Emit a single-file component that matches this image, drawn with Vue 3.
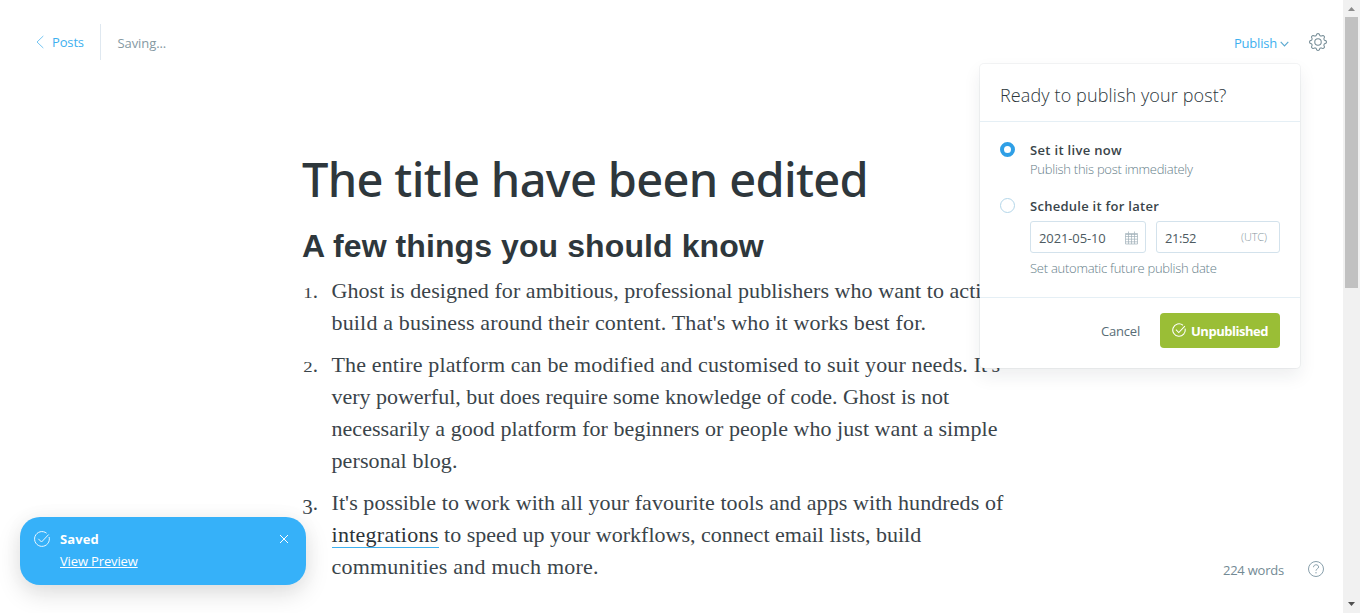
<script setup>
const items = [
  {
    n: '1',
    lines: [
      [{ t: 'Ghost is designed for ambitious, professional publishers who want to actively', s: 0.057 }],
      [{ t: "build a business around their content. That's who it works best for.", s: 0.165 }],
    ],
  },
  {
    n: '2',
    lines: [
      [{ t: "The entire platform can be modified and customised to suit your needs. It's", s: 0.138 }],
      [{ t: 'very powerful, but does require some knowledge of code. Ghost is not', s: -0.02 }],
      [{ t: 'necessarily a good platform for beginners or people who just want a simple', s: 0.05 }],
      [{ t: 'personal blog.', s: 0.097 }],
    ],
  },
  {
    n: '3',
    lines: [
      [{ t: "It's possible to work with all your favourite tools and apps with hundreds of", s: 0.08 }],
      [
        { t: 'integrations', s: 0.27, link: true },
        { t: ' to speed up your workflows, connect email lists, build', s: 0.01 },
      ],
      [{ t: 'communities and much more.', s: 0.22 }],
    ],
  },
]

// Eight-toothed gear outline centred in a 24-unit box
const gearPath = 'M' + Array.from({ length: 96 }, (_, i) => {
  const a = (i / 96) * Math.PI * 2
  const r = 10 + 1.25 * Math.tanh(1.6 * Math.cos(8 * a)) / Math.tanh(1.6)
  return `${(12 + r * Math.sin(a)).toFixed(2)} ${(12 - r * Math.cos(a)).toFixed(2)}`
}).join('L') + 'Z'
</script>

<template>
  <div class="editor">
    <header class="topbar">
      <a class="back">
        <svg width="8" height="14" viewBox="0 0 8 14"><path d="M7.300 1 1 7l6.300 6" /></svg>
        <span>Posts</span>
      </a>
      <span class="status">Saving...</span>
      <span class="publish">Publish</span>
      <svg class="chev" width="9" height="6" viewBox="0 0 9 6"><path d="M.7.8 4.500 4.900 8.300.8" /></svg>
      <svg class="gear" width="18" height="18" viewBox="0 0 24 24">
        <circle cx="12" cy="12" r="4.300" />
        <path :d="gearPath" />
      </svg>
    </header>

    <main class="post">
      <h1>The title have been edited</h1>
      <h2>A few things you should know</h2>
      <ol>
        <li v-for="item in items" :key="item.n">
          <span class="num"><i :class="'d' + item.n">{{ item.n }}</i>.</span>
          <div class="text">
            <div v-for="(line, i) in item.lines" :key="i" class="line"><span
              v-for="run in line" :key="run.t" :class="{ link: run.link }" :style="{ letterSpacing: run.s + 'px' }">{{ run.t }}</span></div>
          </div>
        </li>
      </ol>
    </main>

    <section class="menu">
      <div class="menu-head">Ready to publish your post?</div>
      <div class="menu-body">
        <div class="option">
          <span class="radio on"></span>
          <div class="option-text">
            <div class="label now">Set it live now</div>
            <div class="desc">Publish this post immediately</div>
          </div>
        </div>
        <div class="option later">
          <span class="radio"></span>
          <div class="option-text">
            <div class="label">Schedule it for later</div>
            <div class="fields">
              <div class="field date">
                <span>2021-05-10</span>
                <svg width="13" height="14" viewBox="0 0 13 14">
                  <path d="M.5 2.500h12v10.500H.5zM.5 5.500h12M.5 8.200h12M.5 10.800h12M3.500 3v10M6.500 3v10M9.500 3v10M3.500.5v2M9.500.5v2M1 3.500h11" />
                </svg>
              </div>
              <div class="field time"><span>21:52</span><small>(UTC)</small></div>
            </div>
            <div class="desc auto">Set automatic future publish date</div>
          </div>
        </div>
      </div>
      <div class="menu-foot">
        <span class="cancel">Cancel</span>
        <button>
          <svg width="14" height="14" viewBox="0 0 16 16"><path d="M14.900 6.500A7.100 7.100 0 1 1 12.500 2.600M4.500 7.700l3.200 3.200L14.700 3.500" /></svg>
          <span>Unpublished</span>
        </button>
      </div>
    </section>

    <aside class="toast">
      <svg class="tick" width="16" height="16" viewBox="0 0 16 16"><path d="M15.100 6A7.400 7.400 0 1 1 12.600 2.200M4.300 7.800l3.200 3.200L14.700 3.500" /></svg>
      <div class="toast-text">
        <b>Saved</b>
        <a>View Preview</a>
      </div>
      <svg class="close" width="10" height="10" viewBox="0 0 10 10"><path d="m1 1 8 8M9 1 1 9" /></svg>
    </aside>

    <footer class="count">
      <span>224 words</span>
      <svg width="16" height="16" viewBox="0 0 16 16">
        <circle cx="8" cy="8" r="7.500" />
        <path d="M5.500 6.200C5.500 3 10.600 3 10.600 6c0 1.800-2.600 1.800-2.600 3.700M8 11v1.400" />
      </svg>
    </footer>

    <div class="scrollbar">
      <svg width="17" height="17" viewBox="0 0 17 17"><path fill="#8b8b8b" d="M8.500 7 12 11H5z" /></svg>
      <div class="thumb"></div>
      <svg width="17" height="17" viewBox="0 0 17 17"><path fill="#505050" d="M5 6h7l-3.500 4z" /></svg>
    </div>
  </div>
</template>

<style>
body { margin: 0; overflow: hidden; }
</style>

<style scoped>
.editor {
  position: relative;
  width: 1360px;
  height: 613px;
  overflow: hidden;
  background: #fff;
  color: #394047;
  font: 13px/18px 'Open Sans', 'Noto Sans', sans-serif;
}
svg { display: block; fill: none; flex: none; }
.topbar { display: flex; align-items: flex-start; height: 60px; padding: 24px 33px 0 36px; box-sizing: border-box; width: 1360px; }
.back { display: flex; height: 36px; width: 64px; border-right: 1px solid #dfe8f0; color: #3eb0ef; letter-spacing: -0.15px; line-height: 36px; }
.back svg { margin: 11px 8px 0 0; stroke: #75c5f2; stroke-width: 1; }
.status { margin: 10px 0 0 16.500px; color: #8599a3; letter-spacing: -0.08px; }
.publish { margin: 10px 0 0 auto; color: #3eb0ef; letter-spacing: -0.21px; }
.chev { margin: 17px 20px 0 3px; stroke: #5ba9d0; stroke-width: 1.1; }
.gear { margin: 9px 0 0; stroke: #738a94; stroke-width: 1.35; }

.post { padding: 94px 0 0 302px; }
h1 { margin: 0; font: 500 47px/50px 'Noto Sans', sans-serif; letter-spacing: -0.68px; color: #2e373c; white-space: nowrap; }
h2 { margin: 22px 0 0; font: 700 32px/40px 'Liberation Sans', Arial, sans-serif; letter-spacing: 0.09px; color: #2e373c; }
ol { list-style: none; margin: 9px 0 0; padding: 0; font: 22px/32px 'Liberation Serif', Georgia, serif; color: #3a444a; }
li { display: flex; margin-bottom: 10px; }
.num { width: 16px; margin-right: 13.500px; white-space: nowrap; display: flex; justify-content: flex-end; font-size: 21px; }
.num i { display: block; font-style: normal; }
.d1, .d2 { font-size: 15px; padding-top: 2px; transform: scaleX(1.25); transform-origin: right; }
.d3 { padding-top: 4px; }
.line { white-space: pre; height: 32px; }
.link { display: inline-block; line-height: 22px; height: 23px; border-bottom: 1px solid #3eb0ef; color: #2b3338; }

.menu {
  position: absolute; left: 980px; top: 64px; width: 320px; height: 304px;
  background: #fff; border-radius: 4px;
  box-shadow: 0 0 0 1px rgba(99, 114, 130, .07), 0 8px 18px rgba(27, 39, 51, .08);
}
.menu-head { height: 57px; padding: 0 20px; border-bottom: 1px solid #e5eff5; font-size: 18px; font-weight: 300; line-height: 62px; letter-spacing: .12px; color: #2b363b; }
.menu-body { height: 175px; padding: 20px 20px 0; box-sizing: border-box; }
.option { display: flex; height: 56px; }
.option-text { margin-top: -1px; }
.radio { width: 15px; height: 15px; margin-right: 15px; flex: none; box-sizing: border-box; border: 1px solid #b3d6e9; border-radius: 50%; }
.radio.on { border: 4px solid #2f9fe6; }
.label { font-weight: 600; letter-spacing: .27px; color: #394449; }
.now { letter-spacing: .32px; }
.desc { line-height: 20px; font-weight: 300; letter-spacing: -.27px; color: #667e89; }
.fields { display: flex; gap: 10px; margin-top: 6px; }
.field { display: flex; justify-content: space-between; box-sizing: border-box; height: 32px; padding: 0 8px; border: 1px solid #d3e2ec; border-radius: 3px; line-height: 33px; letter-spacing: -.12px; color: #4d5a61; }
.date { width: 116px; padding-right: 7px; }
.date svg { margin-top: 8.500px; stroke: #9fafb7; stroke-width: .7; }
.time { width: 124px; padding-right: 12px; letter-spacing: -.4px; }
.time small { font-size: 11px; font-weight: 300; line-height: 30px; letter-spacing: -.1px; color: #8797a0; }
.auto { margin-top: 5px; letter-spacing: -.26px; }
.menu-foot { display: flex; justify-content: flex-end; align-items: flex-start; padding: 15px 20px; border-top: 1px solid #e5eff5; }
.cancel { margin: 9px 20px 0 0; letter-spacing: -.2px; color: #586c76; }
button { display: flex; align-items: center; width: 120px; height: 35px; padding: 0 0 0 12px; border: 0; border-radius: 4px; background: #9abe36; color: #fff; font: 700 13px/18px 'Open Sans', sans-serif; letter-spacing: -.47px; }
button svg { margin: -1px 5px 0 0; stroke: #fff; stroke-width: 1.2; }

.toast {
  position: absolute; left: 20px; top: 517px; width: 286px; height: 68px;
  display: flex; align-items: flex-start; box-sizing: border-box; padding: 13px 17px 0 14px;
  border-radius: 20px; background: #36b1f9; color: #fff;
  box-shadow: 0 9px 25px rgba(0, 0, 0, .13), 0 0 22px rgba(0, 0, 0, .03);
}
.tick { margin-top: 1px; stroke: #eaf7ff; stroke-width: 1; }
.toast-text { display: flex; flex-direction: column; flex: 1; align-items: flex-start; margin-left: 10px; }
.toast-text b { letter-spacing: .13px; }
.toast-text a { margin-top: 4px; letter-spacing: -.14px; text-decoration: underline; text-underline-offset: 1px; }
.close { margin-top: 4px; stroke: #fff; stroke-width: 1; }

.count { position: absolute; right: 36px; top: 561px; display: flex; color: #738a94; letter-spacing: -.22px; }
.count svg { margin-left: 24px; stroke: #829aa6; stroke-width: .95; }

.scrollbar { position: absolute; right: 0; top: 0; width: 17px; height: 613px; display: flex; flex-direction: column; background: #f1f1f1; }
.thumb { width: 13px; height: 271px; margin: 0 2px auto; background: #c1c1c1; }
</style>
